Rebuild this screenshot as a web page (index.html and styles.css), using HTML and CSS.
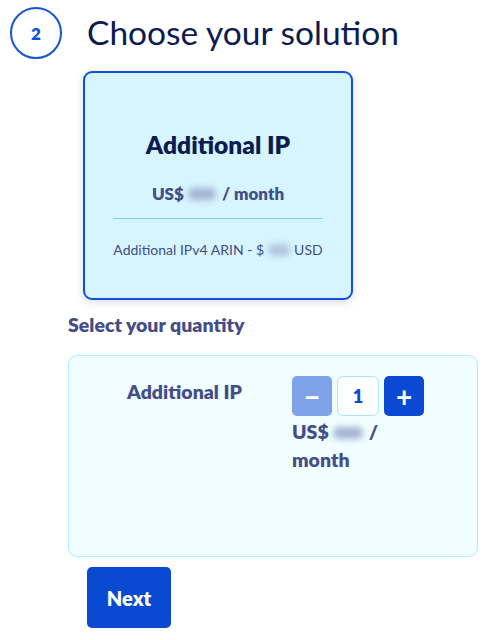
FILE: index.html
```html
<!DOCTYPE html>
<html>
<head>
<meta charset="utf-8">
<link rel="stylesheet" href="styles.css">
</head>
<body>
<div class="page">
  <div class="step-head">
    <div class="step-num">2</div>
    <h1 class="step-title">Choose your solution</h1>
  </div>

  <div class="offer-card">
    <div class="offer-title">Additional IP</div>
    <div class="offer-price">US$<span class="blur blur-card"></span>/ month</div>
    <div class="offer-divider"></div>
    <div class="offer-desc">Additional IPv4 ARIN - $<span class="blur blur-sm"></span>USD</div>
  </div>

  <div class="qty-title">Select your quantity</div>

  <div class="qty-box">
    <div class="qty-label">Additional IP</div>
    <div class="qty-right">
      <div class="qty-controls">
        <button class="qty-btn qty-minus">&#8722;</button>
        <div class="qty-input">1</div>
        <button class="qty-btn qty-plus">+</button>
      </div>
      <div class="qty-price">US$<span class="blur blur-qty"></span>/<br>month</div>
    </div>
  </div>

  <button class="next-btn">Next</button>
</div>
</body>
</html>
```

FILE: styles.css
```css
* { box-sizing: border-box; }
html, body { margin: 0; padding: 0; background: #fff; }
body { font-family: "Lato", "Open Sans", sans-serif; color: #444d86; }

.page { padding: 7px 0 0 0; }

.step-head { display: flex; align-items: center; padding-left: 10px; height: 52px; }
.step-num {
  width: 52px; height: 52px; border-radius: 50%;
  border: 2px solid #1555d9; color: #1050d8;
  display: flex; align-items: center; justify-content: center;
  font-weight: 800; font-size: 17px;
}
.step-title {
  margin: 0 0 0 25px; font-weight: 400; font-size: 33.5px;
  color: #0c1b52; line-height: 40px; position: relative; top: -1px;
}

.offer-card {
  margin: 12px 0 0 83px; width: 270px; height: 229px;
  border: 2px solid #1251d8; border-radius: 9px; background: #d6f5fe;
  box-shadow: 0 2px 8px rgba(40, 60, 140, 0.18);
  display: flex; flex-direction: column; align-items: center;
  padding-top: 57px;
}
.offer-title { font-size: 24.5px; font-weight: 800; color: #0c1b52; line-height: 30px; }
.offer-price { margin-top: 24px; font-size: 17px; font-weight: 800; color: #444d86; line-height: 20px; display: flex; align-items: center; }
.offer-divider { width: 210px; height: 1px; background: #80cdf2; margin-top: 14px; }
.offer-desc { margin-top: 22px; font-size: 14px; color: #444d86; line-height: 18px; display: flex; align-items: center; }

.blur { display: inline-block; height: 12px; border-radius: 6px; background: #a3b3d3; filter: blur(3px); }
.blur-card { width: 28px; margin: 0 6px 0 4px; }
.blur-qty { width: 30px; margin: 0 6px 0 4px; }
.blur-sm { width: 22px; margin: 0 4px 0 4px; background: #b1c4dd; }

.qty-title { margin: 14px 0 0 68px; font-size: 19.5px; font-weight: 800; color: #444d86; line-height: 22px; }

.qty-box {
  margin: 19px 0 0 68px; width: 410px; height: 202px;
  border: 1px solid #b2effd; border-radius: 9px; background: #f0feff;
  display: flex; padding: 20px 0 0 58px;
}
.qty-label { width: 165px; margin-top: 2px; font-size: 19.5px; font-weight: 800; color: #444d86; line-height: 28px; }
.qty-right { display: flex; flex-direction: column; }
.qty-controls { display: flex; gap: 5px; }
.qty-btn {
  width: 40px; height: 40px; border: none; border-radius: 5px; color: #fff;
  font-family: inherit; font-size: 28px; font-weight: 700; padding: 0; line-height: 40px;
}
.qty-minus { background: #7fa3e8; }
.qty-plus { background: #0a49d1; }
.qty-input {
  width: 42px; height: 40px; border: 1px solid #aaeaff; border-radius: 6px; background: #fff;
  color: #0a49d1; font-weight: 800; font-size: 18px;
  display: flex; align-items: center; justify-content: center;
}
.qty-price { font-size: 19.5px; font-weight: 800; color: #444d86; line-height: 28px; margin-top: 2px; }

.next-btn {
  display: block; margin: 10px 0 0 87px; width: 84px; height: 61px;
  border: none; border-radius: 5px; background: #0a49d1; color: #fff;
  font-family: inherit; font-size: 20px; font-weight: 800; padding: 0;
}
```
